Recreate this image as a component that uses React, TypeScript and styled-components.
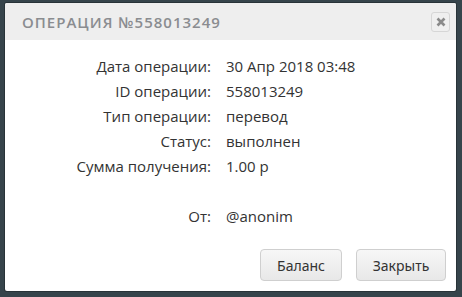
import React from "react";
import styled, { createGlobalStyle } from "styled-components";

const Global = createGlobalStyle`
  html, body { margin: 0; padding: 0; background: #36444b; }
  body { width: 462px; height: 297px; overflow: hidden; }
`;

const Page = styled.div`
  padding: 3px 6px 6px 5px;
  box-sizing: border-box;
  width: 462px;
  height: 297px;
`;

const Dialog = styled.div`
  width: 451px;
  height: 288px;
  background: #fff;
  border-radius: 2px;
  box-shadow: 0 0 0 1px rgba(0,0,0,0.25);
  display: flex;
  flex-direction: column;
  overflow: hidden;
`;

const Header = styled.div`
  height: 37px;
  background: #eeeeee;
  display: flex;
  align-items: center;
  justify-content: space-between;
  padding: 0 6px 0 17px;
`;

const Title = styled.div`
  font-family: "Open Sans", sans-serif;
  font-weight: 600;
  font-size: 15px;
  letter-spacing: 1px;
  color: #8a8c90;
  text-transform: uppercase;
`;

const CloseBtn = styled.button`
  width: 19px;
  height: 20px;
  padding: 0;
  border: 1px solid #d6d6d6;
  border-radius: 3px;
  background: #efefef;
  display: flex;
  align-items: center;
  justify-content: center;
  margin-top: 1px;
`;

const Body = styled.div`
  flex: 1;
  display: grid;
  grid-template-columns: 206px 1fr;
  column-gap: 15px;
  grid-auto-rows: 25px;
  align-content: start;
  padding-top: 14px;
`;

const Label = styled.div`
  font-family: "Open Sans", sans-serif;
  font-size: 15px;
  color: #333;
  text-align: right;
  line-height: 25px;
  white-space: nowrap;
`;

const Value = styled(Label)`
  text-align: left;
`;

const Footer = styled.div`
  display: flex;
  justify-content: flex-end;
  gap: 14px;
  padding: 0 10px 10px 0;
`;

const Button = styled.button<{ $w: number }>`
  width: ${(p) => p.$w}px;
  height: 32px;
  border: 1px solid #cfcfcf;
  border-radius: 4px;
  background: linear-gradient(#f7f7f7, #e8e8e8);
  font-family: "Noto Sans", sans-serif;
  font-size: 14px;
  color: #333;
  padding: 0;
`;

const rows: [string, string][] = [
  ["Дата операции:", "30 Апр 2018 03:48"],
  ["ID операции:", "558013249"],
  ["Тип операции:", "перевод"],
  ["Статус:", "выполнен"],
  ["Сумма получения:", "1.00 р"],
  ["", ""],
  ["От:", "@anonim"],
];

export default function App() {
  return (
    <>
      <Global />
      <Page>
        <Dialog>
          <Header>
            <Title>Операция №558013249</Title>
            <CloseBtn aria-label="close">
              <svg width="10" height="10" viewBox="0 0 10 10">
                <path d="M1.5 1.5 L8.5 8.5 M8.5 1.5 L1.5 8.5" stroke="#8a8a8a" strokeWidth="2.6" />
              </svg>
            </CloseBtn>
          </Header>
          <Body>
            {rows.map(([l, v], i) => (
              <React.Fragment key={i}>
                <Label>{l}</Label>
                <Value>{v}</Value>
              </React.Fragment>
            ))}
          </Body>
          <Footer>
            <Button $w={82}>Баланс</Button>
            <Button $w={90}>Закрыть</Button>
          </Footer>
        </Dialog>
      </Page>
    </>
  );
}
